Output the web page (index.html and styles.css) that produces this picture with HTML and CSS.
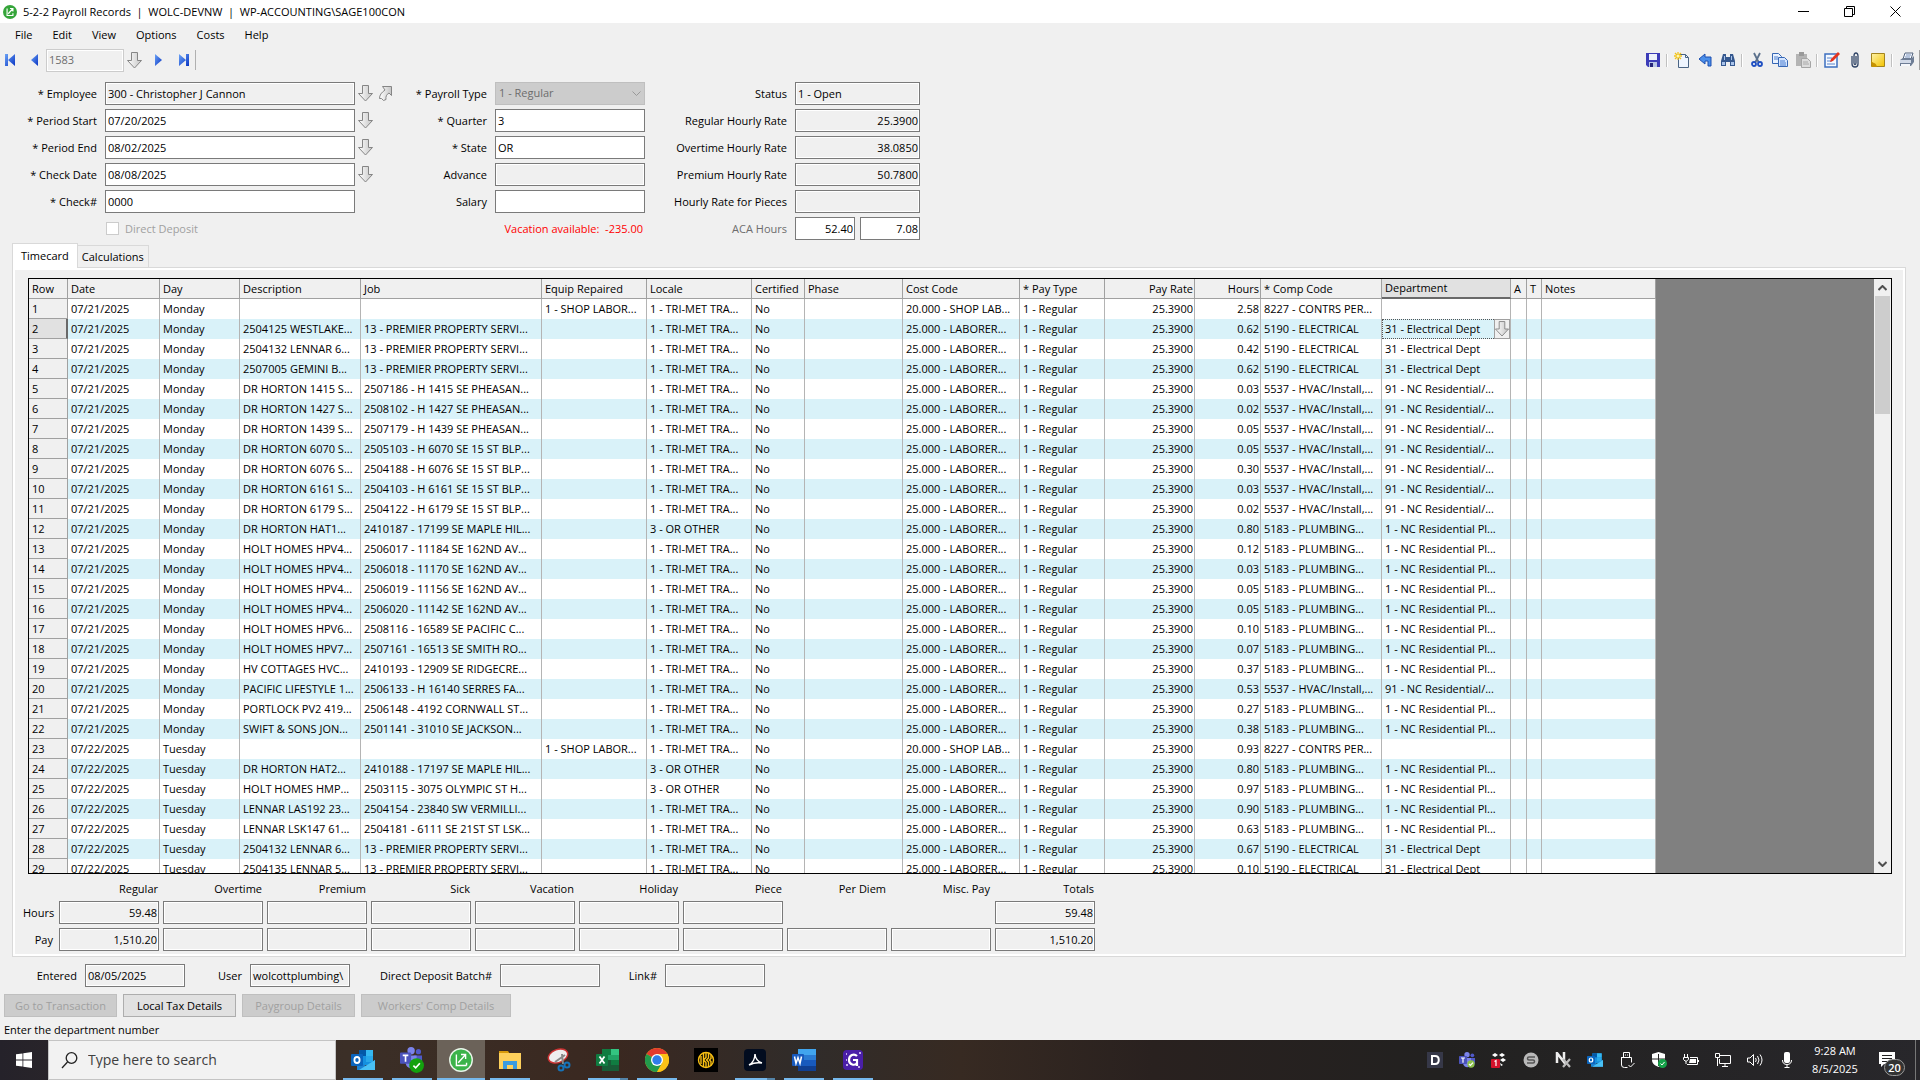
FILE: index.html
```html
<!DOCTYPE html>
<html lang="en">
<head>
<meta charset="utf-8">
<title>5-2-2 Payroll Records</title>
<link rel="stylesheet" href="styles.css">
</head>
<body>
<svg class="defs" aria-hidden="true">
  <defs>
    <linearGradient id="grey" x1="0" y1="0" x2="1" y2="0"><stop offset="0" stop-color="#fff"/><stop offset="1" stop-color="#c4c4c4"/></linearGradient>
    <linearGradient id="blue" x1="0" y1="0" x2="1" y2="1"><stop offset="0" stop-color="#6ba3f5"/><stop offset="1" stop-color="#0a35c4"/></linearGradient>
    <linearGradient id="note" x1="0" y1="0" x2="1" y2="1"><stop offset="0" stop-color="#fff3a8"/><stop offset="1" stop-color="#f2c200"/></linearGradient>
    <symbol id="down" viewBox="0 0 15 17"><path d="M4.500.5h6v8h4L7.500 16 .5 8.500h4z" fill="url(#grey)" stroke="#858585"/></symbol>
    <symbol id="jump" viewBox="0 0 13 15"><path d="M3.500.5h9v9l-2.500-2.500C7.500 8.500 6.500 10.500 7 13.500L4.500 14.500 2.500 12.500 .5 12.500C.5 9 2.500 6.500 6 4z" fill="url(#grey)" stroke="#858585"/></symbol>
    <symbol id="sage" viewBox="0 0 24 24"><circle cx="12" cy="12" r="12" fill="#35a53a"/><path d="M7 6v12h11M9 15l8-9m-5 0h5v5M17 14v4" fill="none" stroke="#fff" stroke-width="2"/></symbol>
    <symbol id="outlook" viewBox="0 0 24 24"><path d="M8 2h14v15H8z" fill="#1490df"/><path d="M8 2h7v6H8z" fill="#0358a7"/><path d="M15 2h7v6h-7z" fill="#35b8f1"/><path d="M15 8h7v6h-7z" fill="#28a8ea"/><path d="M6 12l9 6 9-6v10H6z" fill="#1a82d2"/><path d="M24 12v10H8z" fill="#49c1f5"/><rect y="6" width="12" height="12" rx="1" fill="#0a64bd"/><ellipse cx="6" cy="12" rx="2.600" ry="3" fill="none" stroke="#fff" stroke-width="1.800"/></symbol>
    <symbol id="teams" viewBox="0 0 24 24"><circle cx="12" cy="4" r="4" fill="#7b83eb"/><circle cx="20" cy="5" r="2.800" fill="#5059c9"/><path d="M15 9h9v7c0 5-8 5-9 0z" fill="#5059c9"/><path d="M6 9h12v8c0 8-11 8-12 0z" fill="#7b83eb"/><rect y="6" width="12" height="12" rx="1" fill="#4b53bc"/><path d="M3 9h6M6 9v7" stroke="#fff" stroke-width="1.800"/></symbol>
  </defs>
</svg>

<header class="titlebar">
  <svg class="app-icon"><use href="#sage"/></svg>
  <h1 class="title">5-2-2 Payroll Records  |  WOLC-DEVNW  |  WP-ACCOUNTING\SAGE100CON</h1>
  <div class="window-controls">
    <button aria-label="Minimize"><svg viewBox="0 0 11 11"><path d="M0 5.500h11"/></svg></button>
    <button aria-label="Restore"><svg viewBox="0 0 11 11"><path d="M.5 2.500h8v8h-8zM2.500 2V.5h8v8H9"/></svg></button>
    <button aria-label="Close"><svg viewBox="0 0 11 11"><path d="M.5.5l10 10M10.500.5l-10 10"/></svg></button>
  </div>
</header>

<nav class="menubar">
  <button>File</button><button>Edit</button><button>View</button><button>Options</button><button>Costs</button><button>Help</button>
</nav>

<div class="toolbar">
  <div class="record-nav">
    <button aria-label="First record"><svg width="10" height="12"><path d="M0 0h3v12H0zM10 0v12L3 6z" fill="url(#blue)"/></svg></button>
    <button aria-label="Previous record"><svg width="7" height="12"><path d="M7 0v12L0 6z" fill="url(#blue)"/></svg></button>
    <input class="field muted record-no" aria-label="Record" value="1583" disabled>
    <button class="lookup" aria-label="Look up record"><svg><use href="#down"/></svg></button>
    <button aria-label="Next record"><svg width="7" height="12"><path d="M0 0v12l7-6z" fill="url(#blue)"/></svg></button>
    <button aria-label="Last record"><svg width="10" height="12"><path d="M7 0h3v12H7zM0 0v12l7-6z" fill="url(#blue)"/></svg></button>
    <span class="bar-end"></span>
  </div>
  <div class="tools">
    <button aria-label="Save"><svg viewBox="0 0 16 16"><path d="M1 1h14v14H3l-2-2z" fill="#3c3cb8"/><path d="M4 2h8v6H4z" fill="#eef2fb"/><path d="M4 10h8v5H4z" fill="#b9c6e6"/><path d="M5 11h3v4H5z" fill="#25257a"/></svg></button>
    <i class="sep"></i>
    <button aria-label="New"><svg viewBox="0 0 16 16"><path d="M4.500 2.500h7l3 3v10h-10z" fill="#eef5ff" stroke="#4a6484"/><path d="M11.500 2.500v3h3" fill="none" stroke="#4a6484"/><path d="M4 0v8M0 4h8M1 1l6 6M7 1L1 7" stroke="#f1c21b" stroke-width="1.300"/><circle cx="4" cy="4" r="1.500" fill="#fff6b0"/></svg></button>
    <button aria-label="Undo"><svg viewBox="0 0 16 16"><path d="M2 7l6-5v3h6v9h-3V9H8v3z" fill="#4b8fea" stroke="#1d4fb0"/></svg></button>
    <button aria-label="Find"><svg viewBox="0 0 16 16"><path d="M3 2h3v3h4V2h3l2 7v5h-5v-4H6v4H1V9z" fill="#35588f"/><path d="M2 10h3v3H2zM11 10h3v3h-3zM4 4h1v4H4zM11 4h1v4h-1z" fill="#a9c3ea"/></svg></button>
    <i class="sep"></i>
    <button aria-label="Cut"><svg viewBox="0 0 16 16"><path d="M5 1l5 10M11 1L6 11" stroke="#5b708c" stroke-width="1.800"/><circle cx="5" cy="12" r="2" fill="none" stroke="#1f4fc2" stroke-width="1.800"/><circle cx="11" cy="12" r="2" fill="none" stroke="#1f4fc2" stroke-width="1.800"/></svg></button>
    <button aria-label="Copy"><svg viewBox="0 0 16 16"><path d="M.5 1.500h6l3 3v7h-9z" fill="#e9f2ff" stroke="#3767b5"/><path d="M6.500 5.500h6l3 3v6h-9z" fill="#d4e5ff" stroke="#3767b5"/><path d="M2 5h4M2 7h4M8 9h5M8 11h6M8 13h6" stroke="#4c7fd0"/></svg></button>
    <button aria-label="Paste" disabled><svg viewBox="0 0 16 16"><path d="M1 2h11v12H1z" fill="#b4b4b4"/><path d="M4 0h5v4H4z" fill="#9a9a9a"/><path d="M6.500 6.500h6l3 3v6h-9z" fill="#ddd" stroke="#a5a5a5"/><path d="M8 10h5M8 12h6" stroke="#aaa"/></svg></button>
    <i class="sep"></i>
    <button aria-label="Edit"><svg viewBox="0 0 16 16"><path d="M1 2h12v13H1z" fill="#f5f9ff" stroke="#3d6fc0" stroke-width="1.500"/><path d="M3 6h5M3 9h5M3 12h8" stroke="#5a84cc"/><path d="M6 10l1-3 7-7 2 2-7 7z" fill="#e3341f"/></svg></button>
    <button aria-label="Attachments"><svg viewBox="0 0 16 16"><path d="M5 4v8c0 4 6 4 6 0V4c0-4-4-4-4 0v7c0 2 2 2 2 0V4" fill="none" stroke="#324668" stroke-width="1.300"/></svg></button>
    <button aria-label="Notes"><svg viewBox="0 0 16 16"><path d="M1.500 1.500h13v13h-13z" fill="url(#note)" stroke="#a3841e"/><path d="M1 9c3 3 5 1 6 6H2z" fill="#c79300"/></svg></button>
    <i class="sep"></i>
    <button aria-label="Print"><svg viewBox="0 0 16 16"><path d="M6 1h8l-2 6H4z" fill="#f2f6fd" stroke="#54657f"/><path d="M7 3h5M6 5h5" stroke="#7a93bd"/><path d="M1 8l3-2h9l2-2v6l-3 4H1z" fill="#6e7d95"/><path d="M1 8h11v3H1z" fill="#d2dae8"/><path d="M2 12h9v2H2z" fill="#f5f7fb"/></svg></button>
  </div>
</div>

<main class="window">
  <form class="record">
    <div class="group left">
      <label for="emp">* Employee</label><div class="cell"><input id="emp" class="field" value="300 - Christopher J Cannon" readonly><button type="button" class="lookup" aria-label="Look up employee"><svg><use href="#down"/></svg></button><button type="button" class="jump" aria-label="Open employee"><svg><use href="#jump"/></svg></button></div>
      <label for="ps">* Period Start</label><div class="cell"><input id="ps" class="field edit" value="07/20/2025"><button type="button" class="lookup" aria-label="Look up period start"><svg><use href="#down"/></svg></button></div>
      <label for="pe">* Period End</label><div class="cell"><input id="pe" class="field edit" value="08/02/2025"><button type="button" class="lookup" aria-label="Look up period end"><svg><use href="#down"/></svg></button></div>
      <label for="cd">* Check Date</label><div class="cell"><input id="cd" class="field edit" value="08/08/2025"><button type="button" class="lookup" aria-label="Look up check date"><svg><use href="#down"/></svg></button></div>
      <label for="cn">* Check#</label><div class="cell"><input id="cn" class="field edit" value="0000"></div>
      <span></span><div class="cell check"><input type="checkbox" id="dd" disabled><label for="dd">Direct Deposit</label></div>
    </div>
    <div class="group middle">
      <label for="pt">* Payroll Type</label><div class="select"><select id="pt" disabled><option>1 - Regular</option></select><svg class="chevron" viewBox="0 0 9 5"><path d="M.5.5l4 4 4-4"/></svg></div>
      <label for="qt">* Quarter</label><input id="qt" class="field edit" value="3">
      <label for="st">* State</label><input id="st" class="field edit" value="OR">
      <label for="ad">Advance</label><input id="ad" class="field" readonly>
      <label for="sa">Salary</label><input id="sa" class="field edit">
      <p class="warning">Vacation available:&nbsp; -235.00</p>
    </div>
    <div class="group right">
      <label for="ss">Status</label><input id="ss" class="field" value="1 - Open" readonly>
      <label for="r1">Regular Hourly Rate</label><input id="r1" class="field num" value="25.3900" readonly>
      <label for="r2">Overtime Hourly Rate</label><input id="r2" class="field num" value="38.0850" readonly>
      <label for="r3">Premium Hourly Rate</label><input id="r3" class="field num" value="50.7800" readonly>
      <label for="r4">Hourly Rate for Pieces</label><input id="r4" class="field num" readonly>
      <label for="aca" class="dim">ACA Hours</label><div class="pair"><input id="aca" class="field edit num" value="52.40"><input aria-label="ACA hours, second" class="field edit num" value="7.08"></div>
    </div>
  </form>

  <div class="tabs" role="tablist">
    <button role="tab" class="tab active" aria-selected="true">Timecard</button><button role="tab" class="tab" aria-selected="false">Calculations</button>
  </div>

  <section class="panel">
    <div class="grid">
      <div class="grid-body">
        <table>
          <colgroup><col class="w-row"><col class="w-date"><col class="w-day"><col class="w-desc"><col class="w-job"><col class="w-equip"><col class="w-equip"><col class="w-cert"><col class="w-phase"><col class="w-cost"><col class="w-type"><col class="w-rate"><col class="w-hours"><col class="w-desc"><col class="w-dept"><col class="w-a"><col class="w-t"><col class="w-notes"></colgroup>
          <thead><tr><th>Row</th><th>Date</th><th>Day</th><th>Description</th><th>Job</th><th>Equip Repaired</th><th>Locale</th><th>Certified</th><th>Phase</th><th>Cost Code</th><th>* Pay Type</th><th class="num">Pay Rate</th><th class="num">Hours</th><th>* Comp Code</th><th class="current">Department</th><th>A</th><th>T</th><th>Notes</th></tr></thead>
          <tbody id="rows"></tbody>
        </table>
      </div>
      <div class="scrollbar">
        <svg viewBox="0 0 9 6"><path d="M.5 5l4-4 4 4"/></svg>
        <div class="track"><div class="thumb"></div></div>
        <svg viewBox="0 0 9 6"><path d="M.5 1l4 4 4-4"/></svg>
      </div>
    </div>
    <table class="totals">
      <thead><tr><td></td><th>Regular</th><th>Overtime</th><th>Premium</th><th>Sick</th><th>Vacation</th><th>Holiday</th><th>Piece</th><th>Per Diem</th><th>Misc. Pay</th><th>Totals</th></tr></thead>
      <tbody>
        <tr><th>Hours</th><td><input class="field num" aria-label="Regular hours" value="59.48" readonly></td><td><input class="field num" aria-label="Overtime hours" readonly></td><td><input class="field num" aria-label="Premium hours" readonly></td><td><input class="field num" aria-label="Sick hours" readonly></td><td><input class="field num" aria-label="Vacation hours" readonly></td><td><input class="field num" aria-label="Holiday hours" readonly></td><td><input class="field num" aria-label="Piece hours" readonly></td><td></td><td></td><td><input class="field num" aria-label="Total hours" value="59.48" readonly></td></tr>
        <tr><th>Pay</th><td><input class="field num" aria-label="Regular pay" value="1,510.20" readonly></td><td><input class="field num" aria-label="Overtime pay" readonly></td><td><input class="field num" aria-label="Premium pay" readonly></td><td><input class="field num" aria-label="Sick pay" readonly></td><td><input class="field num" aria-label="Vacation pay" readonly></td><td><input class="field num" aria-label="Holiday pay" readonly></td><td><input class="field num" aria-label="Piece pay" readonly></td><td><input class="field num" aria-label="Per diem" readonly></td><td><input class="field num" aria-label="Miscellaneous pay" readonly></td><td><input class="field num" aria-label="Total pay" value="1,510.20" readonly></td></tr>
      </tbody>
    </table>
  </section>

  <div class="meta">
    <label for="en">Entered</label><input id="en" class="field" value="08/05/2025" readonly>
    <label for="us">User</label><input id="us" class="field" value="wolcottplumbing\" readonly>
    <label for="ba" class="wide">Direct Deposit Batch#</label><input id="ba" class="field" readonly>
    <label for="li">Link#</label><input id="li" class="field" readonly>
  </div>
  <div class="actions">
    <button disabled>Go to Transaction</button><button>Local Tax Details</button><button disabled>Paygroup Details</button><button class="wide" disabled>Workers' Comp Details</button>
  </div>
  <p class="status">Enter the department number</p>
</main>

<footer class="taskbar">
  <button class="start" aria-label="Start"><svg viewBox="0 0 16 16"><path d="M0 2.300l6.500-.9v6.200H0zM7.300 1.300L16 0v7.600H7.300zM0 8.400h6.500v6.200L0 13.700zM7.300 8.400H16V16l-8.700-1.300z" fill="#fff"/></svg></button>
  <label class="search"><svg viewBox="0 0 17 17"><circle cx="10.500" cy="6" r="5.300"/><path d="M6.500 10L1 16"/></svg><input placeholder="Type here to search" aria-label="Search"></label>
  <div class="apps">
    <button class="open" aria-label="Outlook"><svg viewBox="0 0 24 24"><use href="#outlook"/></svg></button>
    <button class="open" aria-label="Teams"><svg viewBox="0 0 26 28"><use href="#teams" width="24" height="24"/><circle cx="18" cy="20" r="8" fill="#13a10e"/><path d="M14.500 20l2.500 2.500 4.500-5" fill="none" stroke="#fff" stroke-width="1.800"/></svg></button>
    <button class="open active" aria-label="Sage 100 Contractor"><svg viewBox="0 0 26 26"><circle cx="13" cy="13" r="12.200" fill="#3bb34a" stroke="#e9f5ea" stroke-width="1.500"/><path d="M8 7v12h11M10 16l8-9m-5 0h5v5M19 16v3" fill="none" stroke="#fff" stroke-width="1.500"/></svg></button>
    <button class="open" aria-label="File Explorer"><svg viewBox="0 0 24 24"><path d="M1 3h9l2 3H1z" fill="#d89b0c"/><path d="M1 5h22v16H1z" fill="#fdd05c"/><path d="M5 21v-8h14v8h-4v-4H9v4z" fill="#3a9be0"/></svg></button>
    <button aria-label="Snipping Tool"><svg viewBox="0 0 24 24"><ellipse cx="11" cy="8" rx="10" ry="6.500" fill="#eee" stroke="#c33" stroke-width="1.500" transform="rotate(-20 11 8)"/><path d="M8 14l10-7M15 6l1 10" stroke="#888" stroke-width="2"/><circle cx="14" cy="20" r="2.500" fill="none" stroke="#1673b8" stroke-width="2"/><circle cx="20" cy="17" r="2.500" fill="none" stroke="#1673b8" stroke-width="2"/></svg></button>
    <button class="open many" aria-label="Excel"><svg viewBox="0 0 24 24"><path d="M6 1h17v22H6z" fill="#21a366"/><path d="M6 1h9v6H6z" fill="#107c41"/><path d="M15 1h8v6h-8z" fill="#33c481"/><path d="M6 12h17v11H6z" fill="#185c37"/><path d="M15 12h8v5h-8z" fill="#107c41"/><rect y="6" width="12" height="12" rx="1" fill="#107c41"/><path d="M3.500 8.500l5 7M8.500 8.500l-5 7" stroke="#fff" stroke-width="1.800"/></svg></button>
    <button class="open" aria-label="Chrome"><svg viewBox="0 0 24 24"><circle cx="12" cy="12" r="12" fill="#fbc116"/><path d="M12 12L1.600 6A12 12 0 0 1 22.400 6z" fill="#e33b2e"/><path d="M12 12L1.600 6A12 12 0 0 0 12 24l5-9z" fill="#229a4b"/><path d="M12 6h10.400A12 12 0 0 1 12 24l5.500-9z" fill="#fbc116"/><circle cx="12" cy="12" r="6" fill="#fff"/><circle cx="12" cy="12" r="4.700" fill="#2f7de9"/></svg></button>
    <button aria-label="Keeper"><svg viewBox="0 0 24 24"><path d="M0 0h24v24H0z" fill="#000"/><circle cx="12" cy="12" r="7.500" fill="none" stroke="#f9c013" stroke-width="1.400"/><path d="M7 8v8M9.500 5v14M12 5v4.500l-2.500 2.500L12 14.500V19M14.500 5v5l-2 2 2 2v5M17 7v3.500L15.500 12l1.500 1.500V17" fill="none" stroke="#f9c013" stroke-width="1.400"/></svg></button>
    <button class="open many" aria-label="Acrobat"><svg viewBox="0 0 24 24"><rect x="1" y="1" width="22" height="22" rx="4" fill="#020c1f"/><path d="M6 17c4-2 6-7 6-11 0 4 3 8 7 9-5-1-9 0-13 2z" fill="none" stroke="#fff" stroke-width="1.500"/></svg></button>
    <button class="open" aria-label="Word"><svg viewBox="0 0 24 24"><path d="M6 1h18v22H6z" fill="#185abd"/><path d="M6 1h18v6H6z" fill="#41a5ee"/><path d="M6 7h18v5H6z" fill="#2b7cd3"/><path d="M6 18h18v5H6z" fill="#103f91"/><rect y="6" width="12" height="12" rx="1" fill="#185abd"/><path d="M2.500 8.500l1.500 7 2-6 2 6 1.500-7" fill="none" stroke="#fff" stroke-width="1.500"/></svg></button>
    <button class="open" aria-label="Greenshot"><svg viewBox="0 0 24 24"><rect x="2" y="2" width="20" height="20" rx="4" fill="#4a1fa8"/><path d="M16 8c-3-3-8-1-8 4s6 6 8 3v-3h-4M16 15v3" fill="none" stroke="#fff" stroke-width="2.200"/><path d="M5 6h1M18 5h2M5 17h2M17 19h2M5 12h1" stroke="#e7dcff" stroke-width="1.500"/></svg></button>
  </div>
  <div class="tray">
    <button aria-label="D"><svg viewBox="0 0 16 16"><path d="M0 0h16v16H0z" fill="#363848"/><path d="M5 4h3c5 0 5 8 0 8H5z" fill="none" stroke="#fff" stroke-width="2"/></svg></button>
    <button aria-label="Teams"><svg viewBox="0 0 24 24"><use href="#teams"/><circle cx="18" cy="18" r="5.500" fill="#8cc04b"/><path d="M15 18l2 2 4-4" fill="none" stroke="#fff" stroke-width="1.800"/></svg></button>
    <button aria-label="Dropbox, 1 notice"><svg viewBox="0 0 16 16"><path d="M1 3l3-2 3 2-3 2zM8 3l3-2 3 2-3 2zM9 8l3-2 3 2-3 2zM9 11l3 2-2 1z" fill="#fff"/><rect y="7" width="9" height="9" rx="1" fill="#d3122b"/><path d="M3.500 9.500L5 8.500V14" fill="none" stroke="#fff" stroke-width="1.200"/></svg></button>
    <button aria-label="Sync"><svg viewBox="0 0 16 16"><circle cx="8" cy="8" r="7.500" fill="#b9b9b9"/><path d="M12 5H6C4 5 4 8 6 8h4c2 0 2 3 0 3H4" fill="none" stroke="#555" stroke-width="1.500"/></svg></button>
    <button aria-label="Nx"><svg viewBox="0 0 16 16"><path d="M2 11V1l7 9V0" fill="none" stroke="#eee" stroke-width="2.500"/><path d="M8 7l7 8M15 7l-7 8" stroke="#bbb" stroke-width="2.200"/></svg></button>
    <button aria-label="Outlook"><svg viewBox="0 0 24 24"><use href="#outlook"/></svg></button>
    <button aria-label="Eject USB"><svg viewBox="0 0 16 16" class="line"><path d="M4.500 5V.5h6V5M2.500 5v8q0 2.500 3 2.500h3M2.500 5.500h10v5M9.500 13l2 2 4-4M6 3h1M8 3h1"/></svg></button>
    <button aria-label="Security"><svg viewBox="0 0 16 16"><path d="M7.500 0L14 2v6c0 4-4 6-6.500 7C5 14 1 12 1 8V2z" fill="#fff"/><path d="M7.500 2v12M1 7h13" stroke="#222"/><circle cx="11.500" cy="11.500" r="4.500" fill="#16a34a"/><path d="M9.500 11.500l1.500 1.500 2.500-3" fill="none" stroke="#fff"/></svg></button>
    <button aria-label="Battery"><svg viewBox="0 0 16 16" class="line"><path d="M4 12.500h10.500v-7H7M15.500 8v2M1.500 2v3M4.500 2v3M.5 5.500h5v2l-2 1.500H2L.5 7.500zM3 9v3"/><path d="M7 7h6v4H6z" fill="#fff" stroke="none"/></svg></button>
    <button aria-label="Network"><svg viewBox="0 0 16 16" class="line"><path d="M5 3.500h10.500v8H4.500V7M7 14.500h6M10 12v2M.5 1.500h4v4h-4zM2.500 6v8"/></svg></button>
    <button aria-label="Volume"><svg viewBox="0 0 16 16" class="line"><path d="M.5 6v4h2.500l3.500 3.500v-11L3 6zM8.500 6q1.500 2 0 4M10.500 4q3 4 0 8M13 2.500q4 5.500 0 11"/></svg></button>
    <button aria-label="Microphone"><svg viewBox="0 0 16 16" class="line"><rect x="5.500" y=".5" width="5" height="10" rx="1" fill="#fff"/><path d="M3.500 8q0 4.500 4.500 4.500T12.500 8M8 13v2.500M5.500 15.500h5"/></svg></button>
    <time class="clock">9:28 AM<br>8/5/2025</time>
    <button class="notices" aria-label="Notifications"><svg viewBox="0 0 16 16"><path d="M0 0h16v12H5l-3 3v-3H0z" fill="#fff"/><path d="M3 3.500h10M3 6.500h10M3 9.500h5" stroke="#222"/></svg><span class="badge">20</span></button>
    <span class="desktop-edge"></span>
  </div>
</footer>
<script src="rows.js"></script>
</body>
</html>
```
FILE: styles.css
```css
* { box-sizing: border-box; }
body { margin: 0; height: 100vh; display: flex; flex-direction: column; overflow: hidden; background: #f0f0f0; color: #000; font: 11px/16px "Open Sans", "Noto Sans", sans-serif; }
button, input, select { font: inherit; color: inherit; margin: 0; }
button { padding: 0; border: 0; background: none; }
p, h1 { margin: 0; }
svg { display: block; }
.defs { position: absolute; width: 0; height: 0; }

.titlebar { display: flex; align-items: center; height: 23px; padding: 0 2px 0 3px; background: #fff; }
.app-icon { width: 14px; height: 14px; }
.title { flex: 1; margin-left: 6px; font-size: 11px; font-weight: 400; white-space: pre; }
.window-controls { display: flex; }
.window-controls button { width: 46px; height: 22px; display: grid; place-items: center; }
.window-controls svg { width: 11px; height: 11px; fill: none; stroke: #000; }
.menubar { display: flex; gap: 20px; height: 24px; padding-left: 15px; align-items: center; }

.field { height: 23px; width: 100%; min-width: 0; padding: 0 1px 1px; border: 1px solid #7a7a7a; outline: 1px solid #fff; outline-offset: -2px; border-radius: 0; background: #f0f0f0; text-indent: 1px; }
.field.edit { background: #fff; }
.field.muted { border-color: #ccc; color: #6d6d6d; }
.num { text-align: right; }
.lookup { width: 15px; height: 17px; flex: none; margin-left: 3px; }
.lookup svg { width: 15px; height: 17px; }
.jump { margin-left: 6px; }
.jump svg { width: 13px; height: 15px; }

.toolbar { display: flex; justify-content: space-between; height: 26px; align-items: center; }
.record-nav { display: flex; align-items: center; padding-left: 5px; }
.record-nav > button:nth-of-type(2) { margin: 0 8px 0 16px; }
.record-nav > button:nth-of-type(4) { margin: 0 17px 0 13px; }
.record-nav > button:first-child { width: 10px; }
.record-nav .record-no { width: 78px; }
.bar-end { width: 1px; height: 20px; margin-left: 6px; background: #b0b0b0; }
.tools { display: flex; align-items: center; padding-right: 1px; border-right: 1px solid #a0a0a0; }
.tools button { width: 23px; height: 20px; display: grid; place-items: center; }
.tools svg { width: 16px; height: 16px; }
.sep { width: 2px; height: 13px; margin: 0 2px; background: #c0c0c0; border-right: 1px solid #fff; }

.window { flex: 1; min-height: 0; display: flex; flex-direction: column; }
.record { display: flex; padding: 9px 0 0 20px; }
.group { display: grid; grid-auto-rows: 23px; row-gap: 4px; column-gap: 8px; align-items: center; }
.group > label { text-align: right; white-space: nowrap; }
.left { grid-template-columns: 77px 290px; }
.middle { grid-template-columns: 92px 150px; }
.right { grid-template-columns: 142px 125px; }
.cell { display: flex; align-items: center; }
.cell .field { width: 250px; }
.check { padding-left: 1px; gap: 6px; color: #a0a0a0; }
.check input { appearance: none; width: 13px; height: 13px; border: 1px solid #ccc; background: #fff; }
.select { position: relative; }
.select select { appearance: none; width: 100%; height: 23px; display: block; padding: 0 3px 1px; border: 1px solid #bfbfbf; border-radius: 0; background: #ccc; color: #6d6d6d; opacity: 1; }
.chevron { position: absolute; right: 4px; top: 9px; width: 9px; height: 5px; fill: none; stroke: #999; }
.warning { grid-column: 1 / -1; text-align: right; padding-right: 2px; color: #f00; }
.dim { color: #6d6d6d; }
.pair { display: flex; gap: 5px; }

.tabs { display: flex; align-items: flex-end; padding: 2px 12px 0; height: 27px; }
.tab { height: 22px; padding: 0 4px; border: 1px solid #d9d9d9; border-width: 1px 1px 0 0; }
.tab.active { height: 25px; padding: 0 8px; background: #fff; border-left-width: 1px; position: relative; top: 1px; }
.panel { flex: 1; min-height: 0; display: flex; flex-direction: column; margin: 0 14px 0 12px; padding: 10px 13px 1px 15px; border: 1px solid #d9d9d9; outline: 2px solid #fff; outline-offset: -3px; }
.grid { flex: 1; min-height: 0; display: flex; border: 1px solid #000; background: #808080; }
.grid-body { flex: 1; min-width: 0; overflow: hidden; }
.grid table { width: 1627px; table-layout: fixed; border-spacing: 0; background: #fff; }
.w-row { width: 39px; } .w-date { width: 92px; } .w-day { width: 80px; } .w-desc { width: 121px; } .w-job { width: 181px; } .w-equip { width: 105px; }
.w-cert { width: 53px; } .w-phase { width: 98px; } .w-cost { width: 117px; } .w-type { width: 85px; } .w-rate { width: 90px; } .w-hours { width: 66px; }
.w-dept { width: 129px; } .w-a { width: 16px; } .w-t { width: 15px; } .w-notes { width: 114px; }
.grid th, .grid td { height: 20px; padding: 0 1px 0 3px; border-right: 1px solid #b4b4b4; overflow: hidden; white-space: nowrap; font-weight: 400; text-align: left; }
.grid th { background: #f0f0f0; border-right-color: #a0a0a0; border-bottom: 1px solid #a0a0a0; }
.grid .num { text-align: right; }
.grid tbody tr:nth-child(even) td { background: #d9f2f9; }
.grid tbody tr:nth-child(2) th { background: #e1e1e1; border-right: 2px solid #696969; }
.grid th.current { background: #e1e1e1; border-bottom: 2px solid #696969; }
.grid td.editing { padding: 0; }
.editor { display: flex; height: 20px; outline: 1px dotted #555; outline-offset: -1px; padding-left: 3px; align-items: center; justify-content: space-between; }
.editor .lookup { width: 16px; height: 20px; border: 1px solid #a0a0a0; background: #f0f0f0; z-index: 1; }
.editor svg { width: 14px; height: 18px; }
.scrollbar { width: 17px; display: flex; flex-direction: column; align-items: center; justify-content: space-between; background: #f0f0f0; padding: 6px 0; }
.scrollbar svg { width: 9px; height: 6px; fill: none; stroke: #505050; stroke-width: 2; }
.track { flex: 1; width: 15px; margin: 5px 0; }
.thumb { height: 21%; background: #cdcdcd; }

.totals { width: 1080px; table-layout: fixed; border-spacing: 4px; margin: 0 0 0 -9px; }
.totals th { font-weight: 400; text-align: right; padding: 0 1px 0 0; height: 19px; }
.totals thead th { padding-top: 3px; }
.totals td { padding: 0; width: 100px; }
.totals tbody th, .totals thead td { width: 32px; padding-right: 2px; }
.totals .field { display: block; }

.meta { display: flex; align-items: center; padding: 7px 0 0 25px; }
.meta label { width: 52px; margin-right: 8px; text-align: right; }
.meta .field { width: 100px; margin-right: 5px; }
.meta .wide { width: 137px; }
.actions { display: flex; gap: 6px; padding: 7px 4px 0; }
.actions button { width: 113px; height: 23px; border: 1px solid #adadad; background: #e1e1e1; }
.actions .wide { width: 150px; }
.actions button:disabled { background: #ccc; border-color: #bfbfbf; color: #a0a0a0; }
.status { padding: 5px 4px 2px; }

.taskbar { display: flex; height: 40px; color: #fff; background: linear-gradient(90deg, #25222a 0, #3b2f27 18%, #3a2820 32%, #302c2a 42%, #372a22 50%, #29211f 60%, #222120 75%, #28272b 100%); }
.start { width: 48px; display: grid; place-items: center; }
.start svg { width: 16px; height: 16px; }
.search { width: 288px; display: flex; align-items: center; gap: 10px; padding-left: 12px; background: #f2f2f2; border: 1px solid #c4c4c4; }
.search svg { width: 17px; height: 17px; fill: none; stroke: #222; stroke-width: 1.3; }
.search input { flex: 1; min-width: 0; border: 0; background: none; padding: 0; font-size: 14px; }
.search input::placeholder { color: #404040; opacity: 1; }
.apps { display: flex; gap: 1px; padding-left: 3px; flex: 1; }
.apps button { width: 48px; display: grid; place-items: center; position: relative; }
.apps svg { width: 24px; height: 26px; }
.apps .active { background: #6b6259; }
.apps .open::after { content: ""; position: absolute; bottom: 0; left: 4px; right: 4px; height: 2px; background: #76b9ed; }
.apps .active::after { left: 0; right: 0; }
.apps .many::after { background: linear-gradient(90deg, #76b9ed 80%, #5484a8 80%); }
.tray { display: flex; align-items: center; }
.tray button { width: 32px; height: 40px; display: grid; place-items: center; }
.tray svg { width: 16px; height: 16px; }
.tray .line { fill: none; stroke: #fff; }
.clock { width: 64px; text-align: center; line-height: 18px; }
.tray .notices { width: 40px; margin-right: 8px; position: relative; }
.badge { position: absolute; left: 17px; top: 19px; width: 21px; height: 17px; border: 1px solid #999; border-radius: 9px; background: #333; font-size: 11px; line-height: 15px; font-weight: 600; }
.desktop-edge { width: 5px; height: 40px; border-left: 1px solid #777; }
```
FILE: rows.js
```js
const SHOP = "1 - SHOP LABOR...";
const JOB13 = "13 - PREMIER PROPERTY SERVI...";
const LOCALES = { 1: "1 - TRI-MET TRA...", 3: "3 - OR OTHER" };
const COMP = {
  S: ["8227 - CONTRS PER...", ""],
  E: ["5190 - ELECTRICAL", "31 - Electrical Dept"],
  H: ["5537 - HVAC/Install,...", "91 - NC Residential/..."],
  P: ["5183 - PLUMBING...", "1 - NC Residential Pl..."]
};
// description, job, hours, comp group, locale
const timecard = [
  ["", "", "2.58", "S", 1],
  ["2504125 WESTLAKE...", JOB13, "0.62", "E", 1],
  ["2504132 LENNAR 6...", JOB13, "0.42", "E", 1],
  ["2507005 GEMINI B...", JOB13, "0.62", "E", 1],
  ["DR HORTON 1415 S...", "2507186 - H 1415 SE PHEASAN...", "0.03", "H", 1],
  ["DR HORTON 1427 S...", "2508102 - H 1427 SE PHEASAN...", "0.02", "H", 1],
  ["DR HORTON 1439 S...", "2507179 - H 1439 SE PHEASAN...", "0.05", "H", 1],
  ["DR HORTON 6070 S...", "2505103 - H 6070 SE 15 ST BLP...", "0.05", "H", 1],
  ["DR HORTON 6076 S...", "2504188 - H 6076 SE 15 ST BLP...", "0.30", "H", 1],
  ["DR HORTON 6161 S...", "2504103 - H 6161 SE 15 ST BLP...", "0.03", "H", 1],
  ["DR HORTON 6179 S...", "2504122 - H 6179 SE 15 ST BLP...", "0.02", "H", 1],
  ["DR HORTON HAT1...", "2410187 - 17199 SE MAPLE HIL...", "0.80", "P", 3],
  ["HOLT HOMES HPV4...", "2506017 - 11184 SE 162ND AV...", "0.12", "P", 1],
  ["HOLT HOMES HPV4...", "2506018 - 11170 SE 162ND AV...", "0.03", "P", 1],
  ["HOLT HOMES HPV4...", "2506019 - 11156 SE 162ND AV...", "0.05", "P", 1],
  ["HOLT HOMES HPV4...", "2506020 - 11142 SE 162ND AV...", "0.05", "P", 1],
  ["HOLT HOMES HPV6...", "2508116 - 16589 SE PACIFIC C...", "0.10", "P", 1],
  ["HOLT HOMES HPV7...", "2507161 - 16513 SE SMITH RO...", "0.07", "P", 1],
  ["HV COTTAGES HVC...", "2410193 - 12909 SE RIDGECRE...", "0.37", "P", 1],
  ["PACIFIC LIFESTYLE 1...", "2506133 - H 16140 SERRES FA...", "0.53", "H", 1],
  ["PORTLOCK PV2 419...", "2506148 - 4192 CORNWALL ST...", "0.27", "P", 1],
  ["SWIFT & SONS JON...", "2501141 - 31010 SE JACKSON...", "0.38", "P", 1],
  ["", "", "0.93", "S", 1],
  ["DR HORTON HAT2...", "2410188 - 17197 SE MAPLE HIL...", "0.80", "P", 3],
  ["HOLT HOMES HMP...", "2503115 - 3075 OLYMPIC ST H...", "0.97", "P", 3],
  ["LENNAR LAS192 23...", "2504154 - 23840 SW VERMILLI...", "0.90", "P", 1],
  ["LENNAR LSK147 61...", "2504181 - 6111 SE 21ST ST LSK...", "0.63", "P", 1],
  ["2504132 LENNAR 6...", JOB13, "0.67", "E", 1],
  ["2504135 LENNAR 5...", JOB13, "0.10", "E", 1]
];

const body = document.getElementById("rows");
timecard.forEach(([description, job, hours, group, locale], i) => {
  const tr = body.insertRow();
  const head = document.createElement("th");
  head.textContent = i + 1;
  tr.append(head);
  const monday = i < 22;
  const shop = group === "S";
  [
    monday ? "07/21/2025" : "07/22/2025", monday ? "Monday" : "Tuesday", description, job,
    shop ? SHOP : "", LOCALES[locale], "No", "",
    shop ? "20.000 - SHOP LAB..." : "25.000 - LABORER...",
    "1 - Regular", "25.3900", hours, COMP[group][0], COMP[group][1], "", "", ""
  ].forEach((text, col) => {
    const td = tr.insertCell();
    td.textContent = text;
    if (col === 10 || col === 11) td.className = "num";
    if (i === 1 && col === 13) {
      td.className = "editing";
      td.innerHTML = '<div class="editor"><span>' + text + '</span><button class="lookup" aria-label="Look up department"><svg><use href="#down"/></svg></button></div>';
    }
  });
});
```
